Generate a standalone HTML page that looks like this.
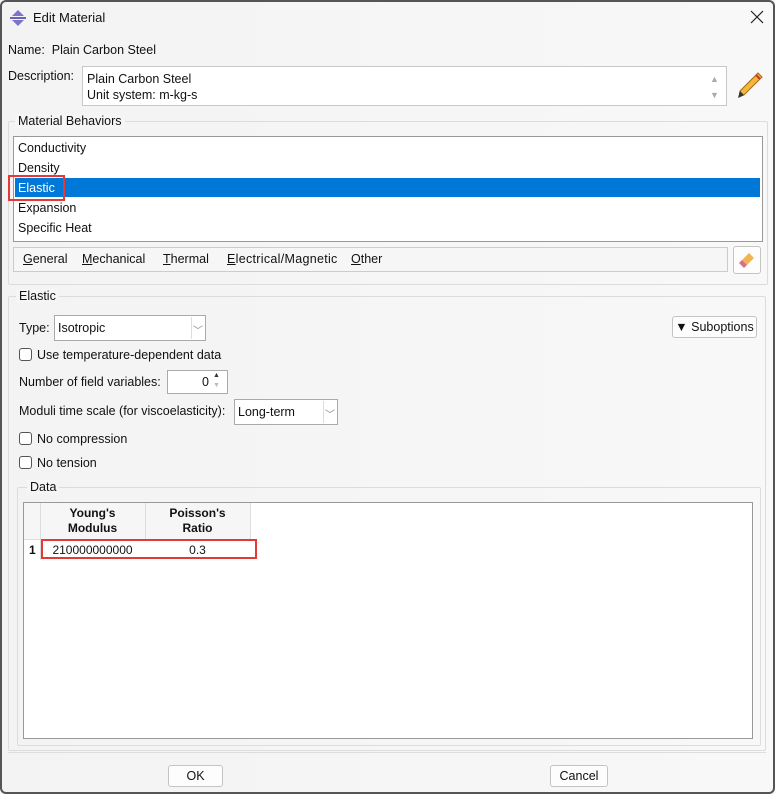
<!DOCTYPE html>
<html><head><style>
*{box-sizing:border-box;margin:0;padding:0}
body{width:775px;height:794px;background:#f4f4f4;font-family:"Liberation Sans",sans-serif;font-size:12.5px;color:#111;position:relative;overflow:hidden}
.a{position:absolute;white-space:nowrap}
.win{position:absolute;left:0;top:0;width:775px;height:794px;border:2px solid #555;border-radius:6px;background:linear-gradient(90deg,#f3f3f3,#f8f8f8)}
.box{position:absolute;border:1px solid #c8c8c8;background:#fff}
.grp{position:absolute;border:1px solid #dcdcdc;border-radius:2px}
.lbl{position:absolute;background:#f5f5f5;padding:0 3px}
.btn{position:absolute;border:1px solid #c4c4c4;border-radius:3px;background:#fdfdfd;text-align:center}
.cb{position:absolute;width:13px;height:13px;border:1px solid #555;border-radius:3px;background:#fff}
u{text-decoration:underline}
.red{position:absolute;border:2px solid #e53935}
</style></head><body>
<div class="win"></div>
<svg class="a" style="left:9px;top:9px" width="18" height="18" viewBox="0 0 18 18"><path d="M9 1 L15 7 H3 Z" fill="#7b74c9"/><path d="M9 17 L15 11 H3 Z" fill="#7b74c9"/><rect x="1" y="8" width="16" height="2" fill="#6a62bf"/></svg>
<div class="a" style="left:33px;top:10px;font-size:13px">Edit Material</div>
<svg class="a" style="left:750px;top:10px" width="14" height="14" viewBox="0 0 14 14"><path d="M1 1 L13 13 M13 1 L1 13" stroke="#222" stroke-width="1.2"/></svg>
<div class="a" style="left:8px;top:43px">Name:&nbsp; Plain Carbon Steel</div>
<div class="a" style="left:8px;top:69px">Description:</div>
<div class="box" style="left:82px;top:66px;width:645px;height:40px"></div>
<div class="a" style="left:87px;top:71px;line-height:16px">Plain Carbon Steel<br>Unit system: m-kg-s</div>
<div class="a" style="left:710px;top:71px;font-size:9px;color:#aaa;line-height:16px">▲<br>▼</div>
<svg class="a" style="left:734px;top:70px" width="30" height="32" viewBox="0 0 30 32"><path d="M24 3 L28 7 L10 25 L5 27 L6 21 Z" fill="#f4b63c" stroke="#a36a10" stroke-width="1"/><path d="M6 21 L10 25 L4 28 Z" fill="#333"/><path d="M22 5 L26 9" stroke="#c33" stroke-width="2"/></svg>
<div class="grp" style="left:8px;top:121px;width:760px;height:164px"></div>
<div class="lbl" style="left:15px;top:114px">Material Behaviors</div>
<div class="box" style="left:13px;top:136px;width:750px;height:106px;border-color:#999"></div>
<div class="a" style="left:15px;top:178px;width:745px;height:19px;background:#0078d7"></div>
<div class="a" style="left:18px;top:138px;line-height:20px">Conductivity<br>Density<br><span style="color:#fff">Elastic</span><br>Expansion<br>Specific Heat</div>
<div class="red" style="left:8px;top:175px;width:57px;height:26px"></div>
<div class="a" style="left:13px;top:247px;width:715px;height:25px;border:1px solid #ccc;background:#f6f6f6"></div>
<div class="a" style="left:23px;top:252px"><u>G</u>eneral</div>
<div class="a" style="left:82px;top:252px"><u>M</u>echanical</div>
<div class="a" style="left:163px;top:252px"><u>T</u>hermal</div>
<div class="a" style="left:227px;top:252px;letter-spacing:0.3px"><u>E</u>lectrical/Magnetic</div>
<div class="a" style="left:351px;top:252px"><u>O</u>ther</div>
<div class="btn" style="left:733px;top:246px;width:28px;height:28px"></div>
<svg class="a" style="left:737px;top:250px" width="20" height="20" viewBox="0 0 20 20"><path d="M12 3 L17 8 L10 15 L5 10 Z" fill="#f2b451"/><path d="M5 10 L10 15 L7 18 L2 13 Z" fill="#d96d8c"/></svg>
<div class="grp" style="left:8px;top:296px;width:758px;height:455px"></div>
<div class="lbl" style="left:16px;top:289px">Elastic</div>
<div class="a" style="left:19px;top:321px">Type:</div>
<div class="box" style="left:54px;top:315px;width:152px;height:26px;border-color:#aaa"></div>
<div class="a" style="left:58px;top:321px">Isotropic</div>
<div class="a" style="left:191px;top:317px;width:13px;height:22px;border-left:1px solid #ddd;color:#888;font-size:10px;padding-top:5px;text-align:center">﹀</div>
<div class="btn" style="left:672px;top:316px;width:85px;height:22px;padding-top:3px">▼ Suboptions</div>
<div class="cb" style="left:19px;top:348px"></div>
<div class="a" style="left:37px;top:348px">Use temperature-dependent data</div>
<div class="a" style="left:19px;top:375px">Number of field variables:</div>
<div class="box" style="left:167px;top:370px;width:61px;height:24px;border-color:#aaa"></div>
<div class="a" style="left:202px;top:375px">0</div>
<div class="a" style="left:213px;top:371px;font-size:7px;line-height:10px;color:#333">▲<br><span style="color:#bbb">▼</span></div>
<div class="a" style="left:19px;top:404px">Moduli time scale (for viscoelasticity):</div>
<div class="box" style="left:234px;top:399px;width:104px;height:26px;border-color:#aaa"></div>
<div class="a" style="left:238px;top:405px">Long-term</div>
<div class="a" style="left:323px;top:401px;width:13px;height:22px;border-left:1px solid #ddd;color:#888;font-size:10px;padding-top:5px;text-align:center">﹀</div>
<div class="cb" style="left:19px;top:432px"></div>
<div class="a" style="left:37px;top:432px">No compression</div>
<div class="cb" style="left:19px;top:456px"></div>
<div class="a" style="left:37px;top:456px">No tension</div>
<div class="grp" style="left:17px;top:487px;width:744px;height:259px"></div>
<div class="lbl" style="left:27px;top:480px">Data</div>
<div class="box" style="left:23px;top:502px;width:730px;height:237px;border-color:#999"></div>
<div class="a" style="left:24px;top:503px;width:227px;height:37px;background:#f6f6f6;border-bottom:1px solid #ddd"></div>
<div class="a" style="left:40px;top:503px;width:1px;height:57px;background:#ddd"></div>
<div class="a" style="left:145px;top:503px;width:1px;height:37px;background:#ddd"></div>
<div class="a" style="left:250px;top:503px;width:1px;height:37px;background:#ddd"></div>
<div class="a" style="left:40px;top:506px;width:105px;text-align:center;font-weight:bold;font-size:12px;line-height:15px">Young's<br>Modulus</div>
<div class="a" style="left:145px;top:506px;width:105px;text-align:center;font-weight:bold;font-size:12px;line-height:15px">Poisson's<br>Ratio</div>
<div class="a" style="left:29px;top:543px;font-weight:bold;font-size:12px">1</div>
<div class="a" style="left:40px;top:543px;width:105px;text-align:center;font-size:12px">210000000000</div>
<div class="a" style="left:145px;top:543px;width:105px;text-align:center;font-size:12px">0.3</div>
<div class="red" style="left:41px;top:539px;width:216px;height:20px"></div>
<div class="a" style="left:8px;top:752px;width:758px;height:1px;background:#ddd"></div>
<div class="btn" style="left:168px;top:765px;width:55px;height:22px;padding-top:3px">OK</div>
<div class="btn" style="left:550px;top:765px;width:58px;height:22px;padding-top:3px">Cancel</div>
</body></html>
